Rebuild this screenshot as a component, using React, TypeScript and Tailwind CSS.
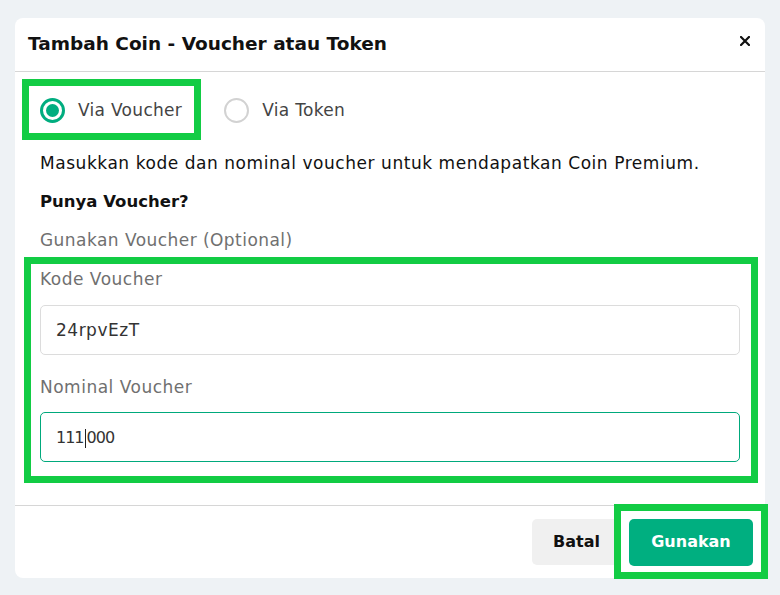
import React from "react";

const font = { fontFamily: "'DejaVu Sans', sans-serif" };

function Radio({ checked }: { checked: boolean }) {
  return checked ? (
    <div className="flex h-[25px] w-[25px] items-center justify-center rounded-full border-[3px] border-[#00ad7f]">
      <div className="h-[13px] w-[13px] rounded-full bg-[#00ad7f]" />
    </div>
  ) : (
    <div className="h-[25px] w-[25px] rounded-full border-2 border-[#d2d2d2]" />
  );
}

export default function App() {
  return (
    <div
      className="relative h-[595px] w-[780px] overflow-hidden bg-[#eef2f5] pl-[15px] pt-[18px]"
      style={font}
    >
      <div className="flex h-[560px] w-[750px] flex-col rounded-[8px] bg-white">
        {/* header */}
        <div className="flex h-[54px] shrink-0 items-center justify-between border-b border-[#d6d6d6] pl-[13px] pr-[15px] pb-[1px]">
          <h1 className="text-[18.5px] font-bold text-[#111]">
            Tambah Coin - Voucher atau Token
          </h1>
          <svg width="10" height="10" viewBox="0 0 10 10" className="mb-[6px]">
            <path d="M1 1 L9 9 M9 1 L1 9" stroke="#111" strokeWidth="2.2" strokeLinecap="square" />
          </svg>
        </div>

        {/* body */}
        <div className="flex h-[434px] shrink-0 flex-col border-b border-[#d6d6d6] px-[25px]">
          <div className="mt-[26px] flex h-[25px] items-center">
            <div className="flex items-center gap-[13px]">
              <Radio checked />
              <span className="text-[17px] leading-[27px] tracking-[0.3px] text-[#444]">Via Voucher</span>
            </div>
            <div className="ml-[42px] flex items-center gap-[13px]">
              <Radio checked={false} />
              <span className="text-[17px] leading-[27px] tracking-[0.3px] text-[#444]">Via Token</span>
            </div>
          </div>

          <p className="mt-[27px] h-[24px] text-[17px] leading-[27px] tracking-[0.55px] text-[#111]">
            Masukkan kode dan nominal voucher untuk mendapatkan Coin Premium.
          </p>
          <p className="mt-[14px] h-[24px] text-[16.5px] font-bold leading-[27px] text-[#111]">
            Punya Voucher?
          </p>
          <p className="mt-[15px] h-[24px] text-[17px] leading-[26px] tracking-[0.45px] text-[#707070]">
            Gunakan Voucher (Optional)
          </p>
          <p className="mt-[15px] h-[24px] text-[17px] leading-[26px] tracking-[0.5px] text-[#707070]">
            Kode Voucher
          </p>
          <div className="mt-[15px] flex h-[50px] items-center rounded-[5px] border border-[#dcdcdc] px-[15px] pt-[2px] text-[17px] tracking-[0.5px] text-[#333]">
            24rpvEzT
          </div>
          <p className="mt-[19px] h-[24px] text-[17px] leading-[26px] tracking-[0.5px] text-[#707070]">
            Nominal Voucher
          </p>
          <div className="mt-[14px] flex h-[50px] items-center rounded-[5px] border border-[#00a97c] px-[15px] pt-[2px] text-[16px] tracking-[-1px] text-[#333]">
            <span>111</span>
            <span className="ml-[1px] mr-[1px] inline-block h-[19px] w-[1px] bg-[#222]" />
            <span>000</span>
          </div>
        </div>

        {/* footer */}
        <div className="flex flex-1 items-center justify-end gap-[8px] pr-[12px]">
          <button className="h-[46px] rounded-[5px] bg-[#f0f0f0] px-[21px] text-[16px] font-semibold text-[#111]">
            Batal
          </button>
          <button className="h-[47px] w-[124px] rounded-[5px] bg-[#00af80] text-[16px] font-semibold text-white">
            Gunakan
          </button>
        </div>
      </div>

      {/* annotation overlays */}
      <div className="pointer-events-none absolute left-[22px] top-[79px] h-[61px] w-[179px] border-[7px] border-[#12cc44]" />
      <div className="pointer-events-none absolute left-[24px] top-[257px] h-[226px] w-[734px] border-[7px] border-[#12cc44]" />
      <div className="pointer-events-none absolute left-[614px] top-[504px] h-[75px] w-[154px] border-[7px] border-[#12cc44]" />
    </div>
  );
}
